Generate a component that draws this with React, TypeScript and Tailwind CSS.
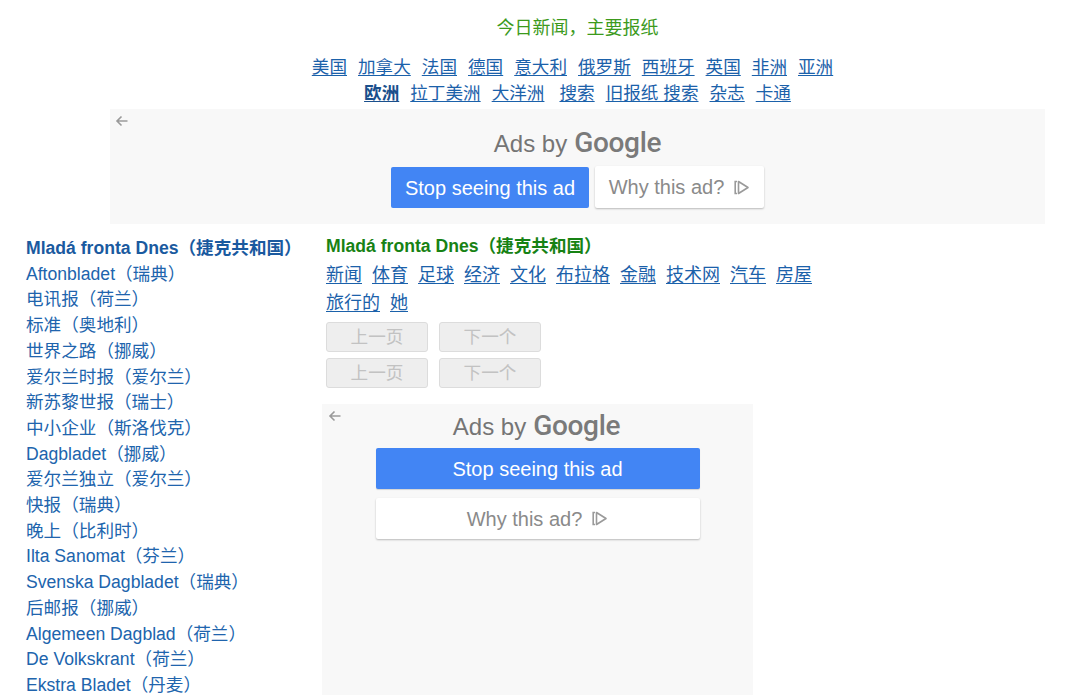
import React from "react";

const FONT = "font-['Liberation_Sans','Noto_Sans_CJK_SC',sans-serif]";

const leftItems = [
  "Aftonbladet（瑞典）",
  "电讯报（荷兰）",
  "标准（奥地利）",
  "世界之路（挪威）",
  "爱尔兰时报（爱尔兰）",
  "新苏黎世报（瑞士）",
  "中小企业（斯洛伐克）",
  "Dagbladet（挪威）",
  "爱尔兰独立（爱尔兰）",
  "快报（瑞典）",
  "晚上（比利时）",
  "Ilta Sanomat（芬兰）",
  "Svenska Dagbladet（瑞典）",
  "后邮报（挪威）",
  "Algemeen Dagblad（荷兰）",
  "De Volkskrant（荷兰）",
  "Ekstra Bladet（丹麦）",
];

const navRow1 = ["美国", "加拿大", "法国", "德国", "意大利", "俄罗斯", "西班牙", "英国", "非洲", "亚洲"];
const navRow2 = ["拉丁美洲", "大洋洲"];
const navRow2b = ["搜索", "旧报纸 搜索", "杂志", "卡通"];

const midRow1 = ["新闻", "体育", "足球", "经济", "文化", "布拉格", "金融", "技术网", "汽车", "房屋"];
const midRow2 = ["旅行的", "她"];

function BackArrow() {
  return (
    <svg width="14" height="14" viewBox="0 0 14 14" fill="none">
      <path d="M12.5 7H2M6.5 2.5L2 7l4.5 4.5" stroke="#9a9a9a" strokeWidth="1.6" />
    </svg>
  );
}

function ChoicesIcon() {
  return (
    <svg width="17" height="17" viewBox="0 0 17 17" fill="none">
      <path d="M4 2.5H2.2V14.5H4" stroke="#9a9a9a" strokeWidth="1.6" />
      <path d="M5.5 2.5L15 8.5L5.5 14.5Z" stroke="#9a9a9a" strokeWidth="1.6" strokeLinejoin="round" />
    </svg>
  );
}

function AdsBy({ className = "" }: { className?: string }) {
  return (
    <div className={`flex items-baseline justify-center text-[#757575] leading-[30px] ${className}`}>
      <span className="font-['Liberation_Sans',sans-serif] text-[24px]">Ads by</span>
      <span className="ml-[7px] font-['Roboto',sans-serif] font-medium text-[28px] tracking-[-0.3px] text-[#7a7a7a]">Google</span>
    </div>
  );
}

const linkCls = "underline underline-offset-2 decoration-1";

export default function App() {
  return (
    <div className={`${FONT} bg-white w-[1080px] h-[695px] overflow-hidden`}>
      {/* Header */}
      <div className="ml-[110px] w-[935px] pt-[16px]">
        <div className="text-center text-[18px] leading-[24px] text-[#3c9a1c]">今日新闻，主要报纸</div>
        <div className="mt-[14px] text-[17.6px] leading-[26px] text-[#1b61aa]">
          <div className="flex justify-center gap-x-[11px] mr-[10px]">
            {navRow1.map((t) => (
              <a key={t} className={linkCls}>{t}</a>
            ))}
          </div>
          <div className="flex justify-center gap-x-[11px]">
            <a className={`${linkCls} font-bold text-[#1a4f8c]`}>欧洲</a>
            {navRow2.map((t) => (
              <a key={t} className={linkCls}>{t}</a>
            ))}
            {navRow2b.map((t, i) => (
              <a key={t} className={`${linkCls} ${i === 0 ? "ml-[4px]" : ""}`}>{t}</a>
            ))}
          </div>
        </div>
        {/* Ad 1 */}
        <div className="mt-[3px] h-[115px] bg-[#f8f8f8] relative">
          <div className="absolute left-[5px] top-[5px]"><BackArrow /></div>
          <div className="pt-[19px]">
            <AdsBy />
          </div>
          <div className="mt-[7px] flex justify-center gap-[6px]">
            <div className="w-[198px] h-[41px] mt-[1px] rounded-[2px] bg-[#4285f4] text-white text-[20px] flex items-center justify-center font-['Liberation_Sans',sans-serif]">
              Stop seeing this ad
            </div>
            <div className="w-[169px] h-[42px] rounded-[2px] bg-white shadow-[0_1px_2px_rgba(0,0,0,0.25)] text-[#8a8a8a] text-[20px] flex items-center justify-center gap-[9px] font-['Liberation_Sans',sans-serif]">
              Why this ad? <ChoicesIcon />
            </div>
          </div>
        </div>
      </div>

      {/* Main */}
      <div className="flex mt-[10px]">
        <div className="pt-[2px] pl-[26px] w-[326px] shrink-0 text-[17.6px] leading-[25.7px] text-[#2064ad]">
          <div className="font-bold text-[#1a5a9f] whitespace-nowrap">Mladá fronta Dnes（捷克共和国）</div>
          {leftItems.map((t) => (
            <div key={t} className="whitespace-nowrap">{t}</div>
          ))}
        </div>
        <div className="flex-1">
          <div className="pt-[1px] text-[17.6px] leading-[22px] font-bold text-[#178214] whitespace-nowrap">Mladá fronta Dnes（捷克共和国）</div>
          <div className="mt-[4px] text-[18px] leading-[28px] text-[#1b61aa]">
            <div className="flex gap-x-[10px]">
              {midRow1.map((t) => (
                <a key={t} className={linkCls}>{t}</a>
              ))}
            </div>
            <div className="flex gap-x-[10px]">
              {midRow2.map((t) => (
                <a key={t} className={linkCls}>{t}</a>
              ))}
            </div>
          </div>
          <div className="mt-[5px] flex flex-col gap-[6px]">
            {[0, 1].map((i) => (
              <div key={i} className="flex gap-[11px]">
                <div className="w-[102px] h-[30px] rounded-[3px] border border-[#dcdcdc] bg-[#eeeeee] text-[#c2c2c2] text-[17.6px] flex items-center justify-center">上一页</div>
                <div className="w-[102px] h-[30px] rounded-[3px] border border-[#dcdcdc] bg-[#eeeeee] text-[#c2c2c2] text-[17.6px] flex items-center justify-center">下一个</div>
              </div>
            ))}
          </div>
          {/* Ad 2 */}
          <div className="mt-[16px] -ml-[4px] w-[431px] h-[300px] bg-[#f8f8f8] relative">
            <div className="absolute left-[6px] top-[5px]"><BackArrow /></div>
            <div className="pt-[7px]">
              <AdsBy className="-ml-[2px]" />
            </div>
            <div className="mt-[6px] flex flex-col items-center gap-[9px]">
              <div className="w-[324px] h-[41px] rounded-[2px] bg-[#4285f4] text-white text-[20px] flex items-center justify-center font-['Liberation_Sans',sans-serif] shadow-[0_1px_1px_rgba(0,0,0,0.15)]">
                Stop seeing this ad
              </div>
              <div className="w-[324px] h-[41px] rounded-[2px] bg-white shadow-[0_1px_2px_rgba(0,0,0,0.25)] text-[#8a8a8a] text-[20px] flex items-center justify-center gap-[9px] font-['Liberation_Sans',sans-serif]">
                Why this ad? <ChoicesIcon />
              </div>
            </div>
          </div>
        </div>
      </div>
    </div>
  );
}
